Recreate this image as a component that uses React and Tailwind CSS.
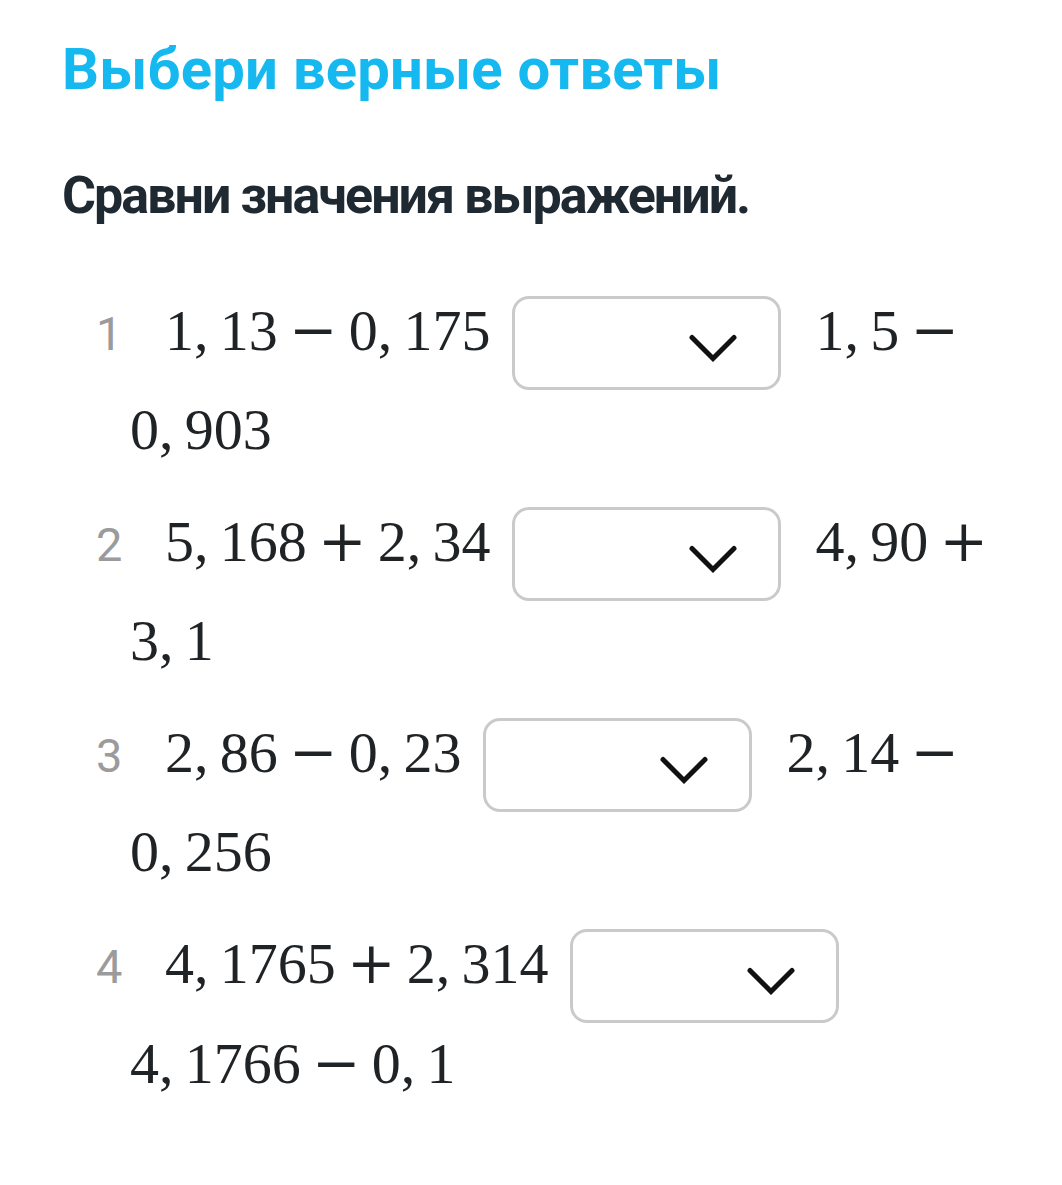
import React from "react";

function Expr({ text }) {
  const tokens = text.split(" ");
  return (
    <span className="whitespace-nowrap">
      {tokens.map((t, i) => {
        if (t === ",") {
          return (
            <span key={i} className="mr-[0.195em]">
              ,
            </span>
          );
        }
        if (t === "-" || t === "+") {
          const last = i === tokens.length - 1;
          return (
            <span
              key={i}
              className={
                last
                  ? "ml-[0.192em] font-['DejaVu_Serif',serif]"
                  : "mx-[0.192em] font-['DejaVu_Serif',serif]"
              }
            >
              {t === "-" ? "\u2212" : "+"}
            </span>
          );
        }
        return <span key={i}>{t}</span>;
      })}
    </span>
  );
}

function Chevron() {
  return (
    <svg width="48" height="28" viewBox="0 0 48 28" fill="none">
      <path
        d="M3 3.5 L24 24.5 L45 3.5"
        stroke="#111"
        strokeWidth="5"
        strokeLinecap="round"
        strokeLinejoin="miter"
      />
    </svg>
  );
}

function Select() {
  return (
    <span className="self-start mt-[16px] ml-[22px] mr-[34px] flex h-[94px] w-[269px] items-center justify-end rounded-[17px] border-[3px] border-[#cacaca] bg-white pr-[41px] pt-[9px]">
      <Chevron />
    </span>
  );
}

function Row({ n, left, right, second }) {
  return (
    <div className="flex flex-col">
      <div className="flex h-[100px] items-baseline pl-[34px]">
        <span className="w-[69px] font-['Roboto',sans-serif] text-[47px] leading-[100px] text-[#9b9b9b] tracking-[-1px]">
          {n}
        </span>
        <span className="leading-[100px]">
          <Expr text={left} />
        </span>
        <Select />
        {right && (
          <span className="leading-[100px]">
            <Expr text={right} />
          </span>
        )}
      </div>
      <div className="flex h-[100px] items-baseline pl-[68px]">
        <span className="leading-[100px]">
          <Expr text={second} />
        </span>
      </div>
    </div>
  );
}

export default function App() {
  return (
    <div className="min-h-[1185px] w-[1062px] bg-white px-[62px] pt-[40px]">
      <h1 className="font-['Roboto',sans-serif] text-[58px] font-bold leading-[58px] text-[#16b8f0] tracking-[0.2px]">
        Выбери верные ответы
      </h1>
      <p className="mt-[72px] font-['Roboto',sans-serif] text-[52px] font-bold leading-[52px] text-[#1e2932] tracking-[-2px]">
        Сравни значения выражений.
      </p>
      <div className="mt-[58px] flex flex-col gap-[11px] font-['Liberation_Serif',serif] text-[58px] text-[#1f2326]">
        <Row n="1" left="1 , 13 - 0 , 175" right="1 , 5 -" second="0 , 903" />
        <Row n="2" left="5 , 168 + 2 , 34" right="4 , 90 +" second="3 , 1" />
        <Row n="3" left="2 , 86 - 0 , 23" right="2 , 14 -" second="0 , 256" />
        <Row n="4" left="4 , 1765 + 2 , 314" second="4 , 1766 - 0 , 1" />
      </div>
    </div>
  );
}
